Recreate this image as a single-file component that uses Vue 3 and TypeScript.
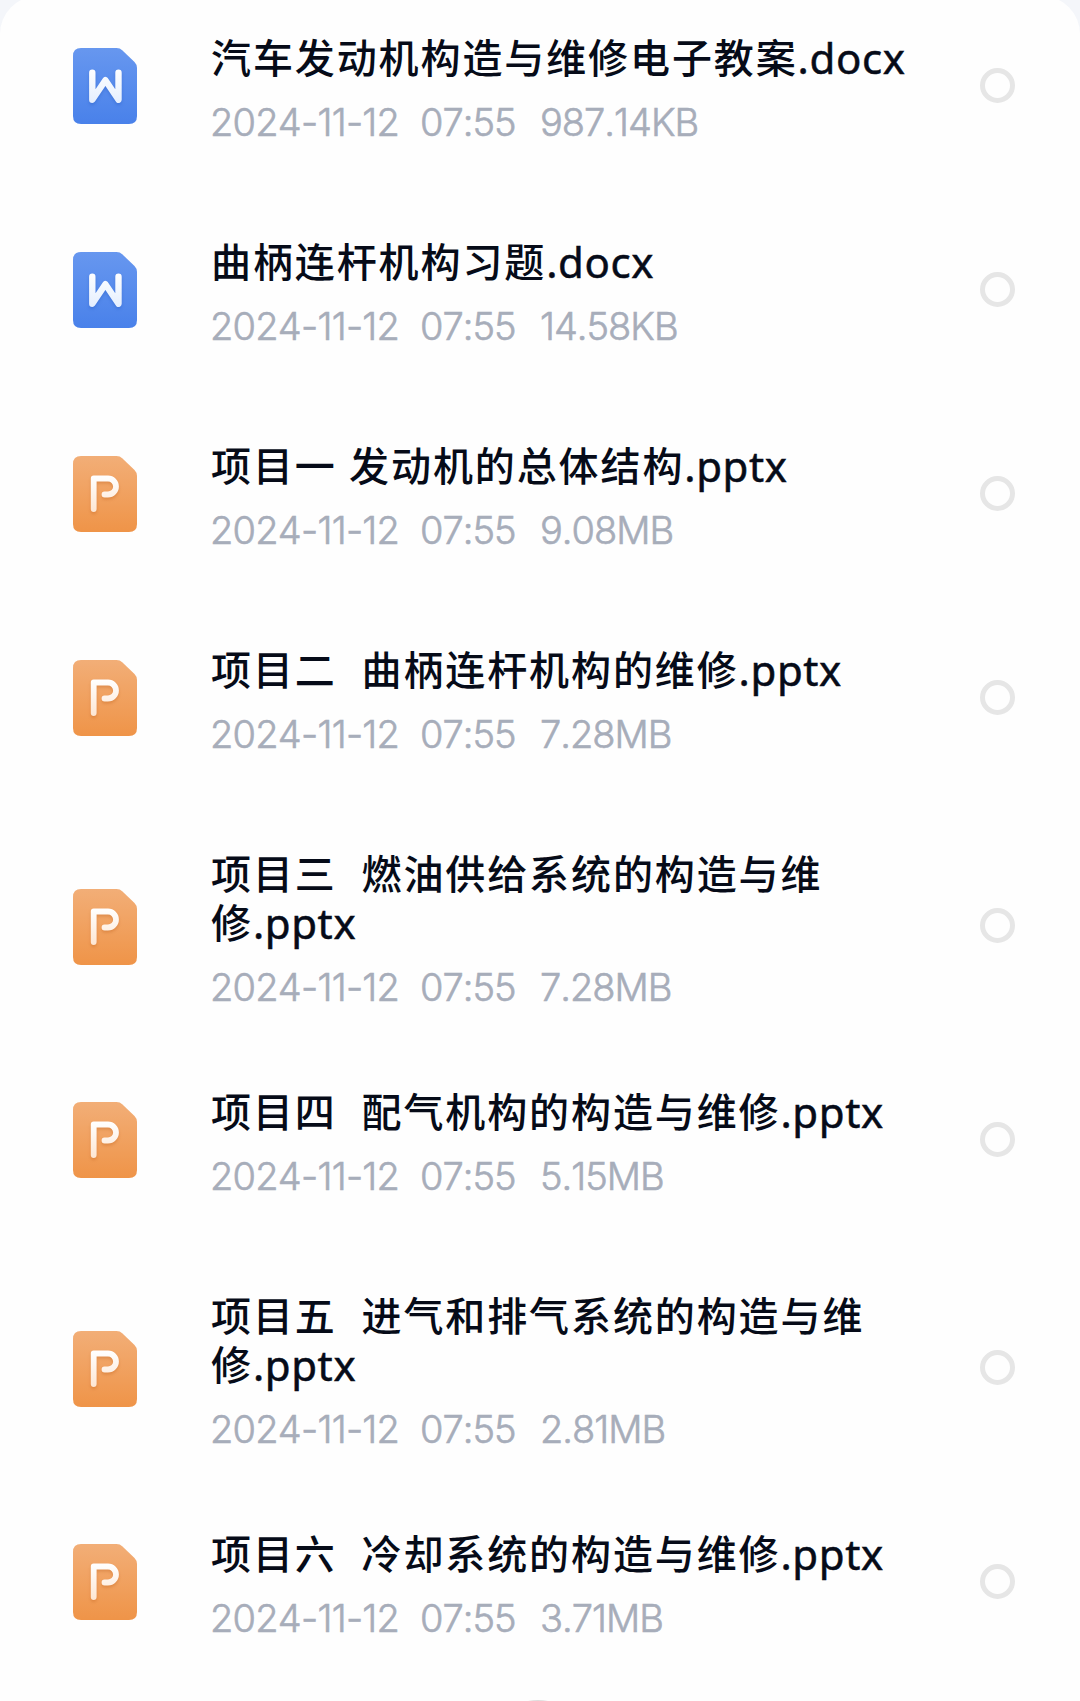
<script setup lang="ts">
interface FileItem {
  kind: 'word' | 'slides'
  name: string
  ext: string
  size: string
}

const date = '2024-11-12'
const time = '07:55'

const files: FileItem[] = [
  { kind: 'word', name: '汽车发动机构造与维修电子教案', ext: '.docx', size: '987.14KB' },
  { kind: 'word', name: '曲柄连杆机构习题', ext: '.docx', size: '14.58KB' },
  { kind: 'slides', name: '项目一 发动机的总体结构', ext: '.pptx', size: '9.08MB' },
  { kind: 'slides', name: '项目二  曲柄连杆机构的维修', ext: '.pptx', size: '7.28MB' },
  { kind: 'slides', name: '项目三  燃油供给系统的构造与维\n修', ext: '.pptx', size: '7.28MB' },
  { kind: 'slides', name: '项目四  配气机构的构造与维修', ext: '.pptx', size: '5.15MB' },
  { kind: 'slides', name: '项目五  进气和排气系统的构造与维\n修', ext: '.pptx', size: '2.81MB' },
  { kind: 'slides', name: '项目六  冷却系统的构造与维修', ext: '.pptx', size: '3.71MB' },
]
</script>

<template>
  <main class="screen">
    <svg class="defs" width="0" height="0" aria-hidden="true">
      <defs>
        <linearGradient id="blue" x1="0" y1="0" x2="0" y2="1">
          <stop offset="0" stop-color="#6797ef" />
          <stop offset="1" stop-color="#4981ea" />
        </linearGradient>
        <linearGradient id="orange" x1="0" y1="0" x2="0" y2="1">
          <stop offset="0" stop-color="#f2ae77" />
          <stop offset="1" stop-color="#ef9448" />
        </linearGradient>
        <linearGradient id="inkBlue" gradientUnits="userSpaceOnUse" x1="0" y1="20" x2="0" y2="56">
          <stop offset="0" stop-color="#ffffff" />
          <stop offset="1" stop-color="#e4eefe" />
        </linearGradient>
        <linearGradient id="inkOrange" gradientUnits="userSpaceOnUse" x1="0" y1="20" x2="0" y2="56">
          <stop offset="0" stop-color="#ffffff" />
          <stop offset="1" stop-color="#fde6d3" />
        </linearGradient>
      </defs>
    </svg>
    <section class="sheet">
      <article v-for="file in files" :key="file.name" class="row">
        <div class="entry">
          <svg class="icon" :class="file.kind" viewBox="0 0 64 76" width="64" height="76">
            <path
              d="M8 0H43.500Q47 0 49.500 2.400L61.500 14Q64 16.500 64 20V68Q64 76 56 76H8Q0 76 0 68V8Q0 0 8 0Z"
              :fill="file.kind === 'word' ? 'url(#blue)' : 'url(#orange)'"
            />
            <path
              v-if="file.kind === 'word'"
              class="mark"
              d="M19.300 24.700V51.800L32.400 32.200L45.500 51.800V24.700"
              stroke="url(#inkBlue)"
            />
            <path
              v-else
              class="mark"
              d="M20.700 53V22.500H35A8 8 0 0 1 35 38.500H31.500"
              stroke="url(#inkOrange)"
            />
          </svg>
          <div class="text">
            <div class="name">{{ file.name }}<span class="ext">{{ file.ext }}</span></div>
            <div class="meta">
              <span class="date">{{ date }}</span>
              <span class="time">{{ time }}</span>
              <span class="size">{{ file.size }}</span>
            </div>
          </div>
          <span class="radio"></span>
        </div>
      </article>
    </section>
    <span class="puck"></span>
  </main>
</template>

<style>
body {
  background: #f4f6fa;
}
</style>

<style scoped>
.screen {
  position: relative;
  box-sizing: border-box;
  width: 1080px;
  height: 1701px;
  overflow: hidden;
  background: #f4f6fa;
}
.defs {
  position: absolute;
}
.sheet {
  box-sizing: border-box;
  height: 1705px;
  margin-top: -4px;
  padding-top: 37px;
  border-radius: 38px 38px 0 0;
  background: #fefefe;
}
.row {
  box-sizing: border-box;
  min-height: 204px;
  padding: 0 65px 83px 73px;
}
.entry {
  display: flex;
  align-items: center;
}
.icon {
  flex: none;
  margin-right: 74px;
}
.mark {
  fill: none;
  stroke-width: 5.8;
  stroke-linecap: round;
  stroke-linejoin: round;
}
.word .mark {
  stroke-width: 6.4;
  filter: drop-shadow(0 2px 1.5px rgba(35, 85, 190, 0.35));
}
.slides .mark {
  filter: drop-shadow(0 2px 1.5px rgba(190, 95, 25, 0.35));
}
.text {
  flex: 1;
  min-width: 0;
}
.name {
  margin-top: -1px;
  font-family: "Noto Sans CJK SC", sans-serif;
  font-size: 40px;
  font-weight: 500;
  line-height: 49px;
  letter-spacing: 1.9px;
  word-spacing: 1.5px;
  white-space: pre;
  color: #060b18;
}
.ext {
  font-family: "Noto Sans", sans-serif;
  font-size: 42px;
  font-weight: 400;
  line-height: 0;
  letter-spacing: 0.6px;
  vertical-align: -1px;
  -webkit-text-stroke: 0.5px #060b18;
}
.meta {
  display: flex;
  margin-top: 24px;
  margin-left: -1px;
  font-family: Inter, sans-serif;
  font-size: 38px;
  font-weight: 300;
  font-kerning: none;
  line-height: 34px;
  letter-spacing: -1px;
  white-space: nowrap;
  color: #a7adba;
  -webkit-text-stroke: 0.6px #a7adba;
}
.date {
  width: 210px;
  letter-spacing: -0.75px;
}
.time {
  width: 120px;
}
.radio {
  box-sizing: border-box;
  flex: none;
  width: 35px;
  height: 35px;
  margin-bottom: 2px;
  border: 5px solid #e6e6e6;
  border-radius: 50%;
}
.puck {
  position: absolute;
  top: 1700px;
  left: 488px;
  width: 100px;
  height: 100px;
  border-radius: 50%;
  background: #dedcdc;
}
</style>
